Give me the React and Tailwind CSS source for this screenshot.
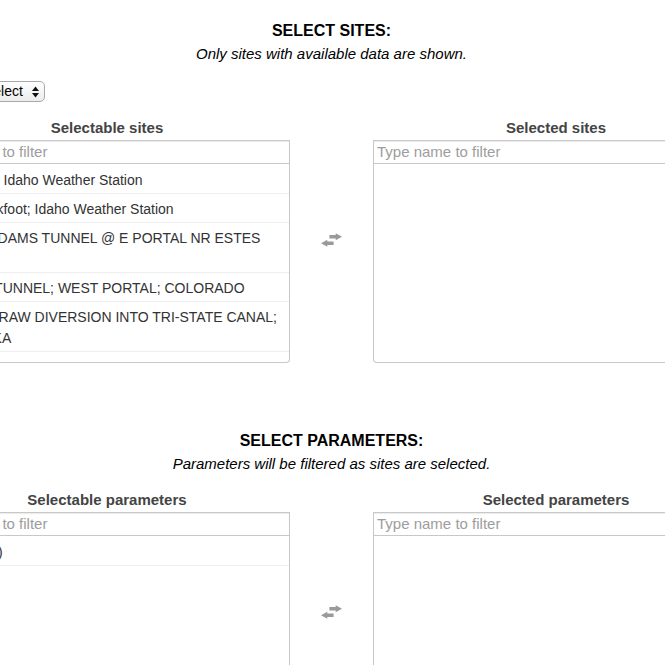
import React from "react";

const sites = [
  ["Aberdeen; Idaho Weather Station"],
  ["Near Blackfoot; Idaho Weather Station"],
  ["ALVA B. ADAMS TUNNEL @ E PORTAL NR ESTES PARK"],
  ["MOFFAT TUNNEL; WEST PORTAL; COLORADO"],
  ["NORTH DRAW DIVERSION INTO TRI-STATE CANAL; NEBRASKA"],
];

const params = ["Inflow (cfs)"];

function TransferIcon() {
  return (
    <svg width="21" height="14" viewBox="0 0 20 13" className="block">
      <polygon points="8,1.8 14,1.8 14,0 20,3.4 14,6.8 14,5 8,5" fill="#9a9a9a" />
      <polygon points="12,8 6,8 6,6.2 0,9.6 6,13 6,11.2 12,11.2" fill="#9a9a9a" />
    </svg>
  );
}

function FilterInput({ left }) {
  return (
    <div className="h-[24px] border border-[#c8c8c8] shadow-[inset_0_1px_1px_rgba(0,0,0,0.08)] px-[3px] flex items-center">
      <span className={(left ? "indent-[-4px] " : "") + "text-[15px] text-[#9d9d9d] whitespace-nowrap"}>Type name to filter</span>
    </div>
  );
}

function Column({ title, items, left }) {
  return (
    <div className="w-[366px] flex flex-col">
      <div className="text-[15px] leading-[20px] font-bold text-[#444] text-center">{title}</div>
      <div className="mt-[2px]">
        <FilterInput left={left} />
      </div>
      <div className="h-[199px] pt-[1px] border border-[#c8c8c8] border-t-0 rounded-b-[4px] overflow-hidden">
        {items.map((t, i) => (
          <div key={i} className="pl-[10px] pr-[8px] pt-[5px] pb-[2px] border-b border-[#eeeeee] text-[14px] leading-[21px] text-[#333]">
            {t}
          </div>
        ))}
      </div>
    </div>
  );
}

function Section({ heading, note, left, right, leftItems, children }) {
  return (
    <div>
      <div className="text-[16px] leading-[20px] font-bold text-black text-center">{heading}</div>
      <div className="mt-[3px] text-[15px] leading-[20px] italic text-black text-center">{note}</div>
      {children}
      <div className="mt-[16px] flex">
        <Column title={left} items={leftItems} left />
        <div className="w-[83px] flex justify-center pt-[115px]">
          <TransferIcon />
        </div>
        <Column title={right} items={[]} />
      </div>
    </div>
  );
}

export default function App() {
  return (
    <div className="w-[665px] h-[665px] overflow-hidden bg-white font-['Liberation_Sans',Arial,sans-serif]">
      <div className="w-[815px] ml-[-76px] pt-[21px]">
        <Section
          heading="SELECT SITES:"
          note="Only sites with available data are shown."
          left="Selectable sites"
          right="Selected sites"
          leftItems={sites}
        >
          <div className="mt-[17px] ml-[52px] w-[69px] h-[21px] border border-[#a9a9a9] rounded-[5px] bg-gradient-to-b from-white to-[#ececec] flex items-center pl-[7px] pr-[5px]">
            <span className="text-[14px] text-black flex-1">Select</span>
            <svg width="7" height="12" viewBox="0 0 7 12">
              <polygon points="3.5,0.5 7,5 0,5" fill="#111" />
              <polygon points="0,7 7,7 3.5,11.5" fill="#111" />
            </svg>
          </div>
        </Section>
        <div className="mt-[68px]">
          <Section
            heading="SELECT PARAMETERS:"
            note="Parameters will be filtered as sites are selected."
            left="Selectable parameters"
            right="Selected parameters"
            leftItems={params}
          />
        </div>
      </div>
    </div>
  );
}
